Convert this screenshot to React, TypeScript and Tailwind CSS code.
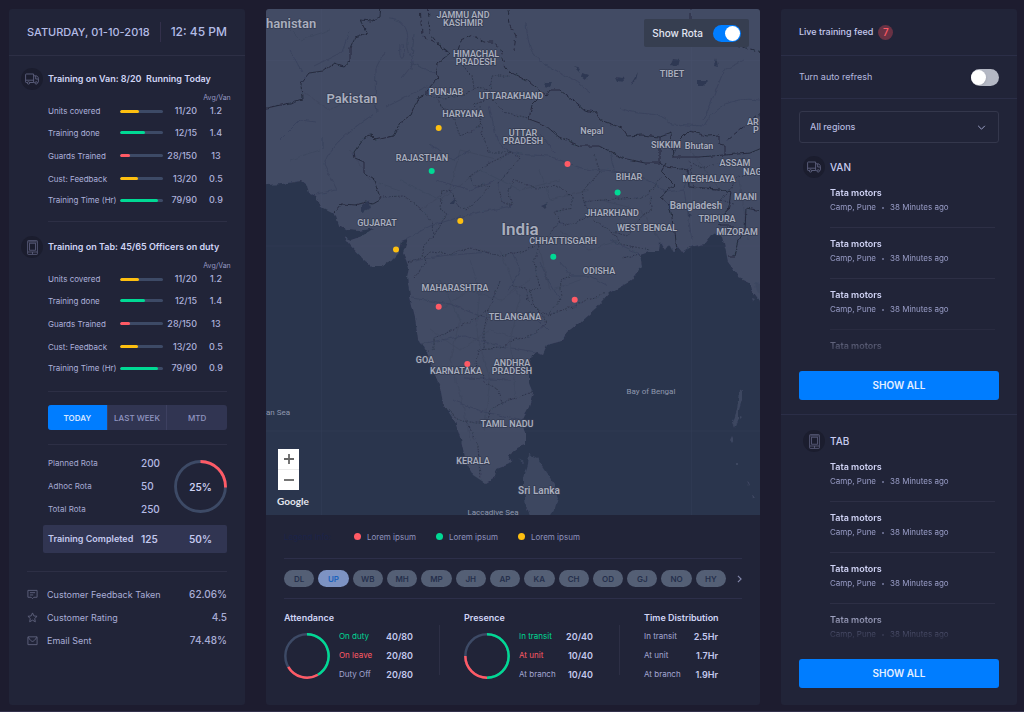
import { useState } from "react";
import type { ReactNode } from "react";

type Tone = "amber" | "green" | "red";

const BAR: Record<Tone, string> = {
  amber: "bg-[#fdbf10]",
  green: "bg-[#00d994]",
  red: "bg-[#ff5a65]",
};

const metrics: { label: string; tone: Tone; fill: number; value: string; avg: string }[] = [
  { label: "Units covered", tone: "amber", fill: 44, value: "11/20", avg: "1.2" },
  { label: "Training done", tone: "green", fill: 59, value: "12/15", avg: "1.4" },
  { label: "Guards Trained", tone: "red", fill: 23, value: "28/150", avg: "13" },
  { label: "Cust: Feedback", tone: "amber", fill: 43, value: "13/20", avg: "0.5" },
  { label: "Training Time (Hr)", tone: "green", fill: 88, value: "79/90", avg: "0.9" },
];

const regions = ["DL", "UP", "WB", "MH", "MP", "JH", "AP", "KA", "CH", "OD", "GJ", "NO", "HY"];

function TruckIcon() {
  return (
    <svg viewBox="0 0 14 12" className="h-3 w-3.5" fill="none" stroke="#5f6280" strokeWidth=".9">
      <path d="M2 9.500H1.200a.6.6 0 0 1-.6-.6V1.600a.6.6 0 0 1 .6-.6H8.600v8.500H5M.6 7.200h8M8.600 2.800h2.200c1.500 0 2.600 1.200 2.600 2.800v3.300c0 .4-.2.600-.6.600M8.600 9.500h1M10.700 3v3h2.600" />
      <circle cx="3.500" cy="9.900" r="1.200" />
      <circle cx="11.200" cy="9.900" r="1.200" />
    </svg>
  );
}

function TabletIcon() {
  return (
    <svg viewBox="0 0 11 15" className="h-[15px] w-[11px]" fill="none" stroke="#5f6280" strokeWidth=".8">
      <rect x=".6" y=".6" width="9.800" height="13.800" rx=".6" />
      <rect x="2.600" y="3.200" width="5.800" height="7" />
      <path d="M.8 12h9.400M5.500 12v2.200M1.200 1.900h8.600" />
    </svg>
  );
}

function IconDisc({ children }: { children: ReactNode }) {
  return (
    <span className="flex size-[22px] shrink-0 items-center justify-center rounded-full bg-[#1b1d2e]">{children}</span>
  );
}

function Donut({ size, arcs, children }: { size: string; arcs: { d: string; color: string }[]; children?: ReactNode }) {
  return (
    <div className={`relative flex shrink-0 items-center justify-center ${size}`}>
      <svg viewBox="0 0 52 52" className="absolute inset-0 size-full" fill="none" strokeWidth="2.800">
        <circle cx="26" cy="26" r="24.500" stroke="#3d4a66" />
        {arcs.map((arc) => (
          <path key={arc.d} d={arc.d} stroke={arc.color} />
        ))}
      </svg>
      <div className="relative flex">{children}</div>
    </div>
  );
}

function Rule({ className }: { className: string }) {
  return <hr className={`border-0 border-t border-[#2d2f45] ${className}`} />;
}

function MetricBlock({ icon, title }: { icon: ReactNode; title: string }) {
  return (
    <section>
      <div className="flex items-center gap-[5px] pl-3">
        <IconDisc>{icon}</IconDisc>
        <h2 className="whitespace-pre text-[9px] font-semibold text-[#d0d4f5]">{title}</h2>
      </div>
      <table className="ml-[39px] w-[187px] table-fixed border-collapse">
        <thead>
          <tr className="text-[7px] text-[#9599c3]">
            <th className="w-[72px] p-0" />
            <th className="w-[43px] p-0" />
            <th className="w-[34px] p-0" />
            <th className="p-0 text-center font-normal">
              <div className="h-[11px] pl-0.5 leading-[15px]">Avg/Van</div>
            </th>
          </tr>
        </thead>
        <tbody>
          {metrics.map((m) => (
            <tr key={m.label} className="h-[23px] text-[9px] leading-[14px] text-[#adb1db] first:h-5 last:h-5">
              <th scope="row" className="whitespace-nowrap p-0 text-left text-[8px] font-normal">
                {m.label}
              </th>
              <td className="p-0">
                <div className="h-[3px] overflow-hidden rounded-full bg-[#3d4a66]">
                  <div className={`h-full rounded-full ${BAR[m.tone]}`} style={{ width: `${m.fill}%` }} />
                </div>
              </td>
              <td className="p-0 text-right font-medium">{m.value}</td>
              <td className="p-0 text-center font-medium">{m.avg}</td>
            </tr>
          ))}
        </tbody>
      </table>
    </section>
  );
}

function Overview() {
  const [range, setRange] = useState("TODAY");
  return (
    <aside className="flex flex-col rounded-[3px] bg-[#212438]">
      <header className="flex h-[47px] items-center justify-between border-b border-[#2d2f45] px-[18px] text-[#b4bce6]">
        <span className="text-[11px] font-medium">SATURDAY, 01-10-2018</span>
        <span className="flex h-5 items-center border-l border-[#33304b] pl-2.5 text-[12px] font-medium">12: 45 PM</span>
      </header>
      <div className="pt-3">
        <MetricBlock icon={<TruckIcon />} title="Training on Van: 8/20  Running Today" />
      </div>
      <Rule className="ml-[39px] mr-[18px] mt-[11px]" />
      <div className="pt-3.5">
        <MetricBlock icon={<TabletIcon />} title="Training on Tab: 45/65 Officers on duty" />
      </div>
      <Rule className="ml-[39px] mr-[18px] mt-[13px]" />

      <div className="ml-[39px] mr-[18px] mt-[13px] grid h-[25px] grid-cols-3 overflow-hidden rounded-[3px] bg-[#313552]">
        {["TODAY", "LAST WEEK", "MTD"].map((r) => (
          <button
            key={r}
            type="button"
            onClick={() => setRange(r)}
            className={`border-r border-[#3d4060] text-[8px] last:border-r-0 ${
              range === r ? "bg-[#007dff] font-semibold text-[#d7e6ff]" : "font-medium text-[#9297c2]"
            }`}
          >
            {r}
          </button>
        ))}
      </div>
      <Rule className="ml-[39px] mr-[18px] mt-3.5" />

      <div className="ml-[39px] mr-[18px] mt-[7px] flex items-center justify-between">
        <dl className="grid grid-cols-[93px_auto] text-[10px] leading-[23px] text-[#b4bae4]">
          {[
            ["Planned Rota", "200"],
            ["Adhoc Rota", "50"],
            ["Total Rota", "250"],
          ].map(([k, v]) => (
            <div key={k} className="contents">
              <dt className="text-[8px] leading-[23px] text-[#a6aad3]">{k}</dt>
              <dd className="font-medium">{v}</dd>
            </div>
          ))}
        </dl>
        <Donut size="size-[53px]" arcs={[{ d: "M26 1.500A24.500 24.500 0 0 1 50.500 26v1", color: "#ff5a65" }]}>
          <span className="text-[10px] font-semibold leading-3 text-[#cdd1f2]">25%</span>
        </Donut>
      </div>
      <div className="ml-[34px] mr-[18px] mt-1 flex h-7 items-center rounded-[2px] bg-[#313552] text-[10px] font-semibold text-[#c3c8ee]">
        <span className="w-[98px] pl-[5px] text-[9px]">Training Completed</span>
        <span>125</span>
        <span className="ml-auto w-[53px] text-center">50%</span>
      </div>
      <Rule className="mx-[18px] mt-[18px]" />

      <ul className="mx-[18px] mt-[11px] text-[10px] text-[#a9add6]">
        <li className="flex h-[23px] items-center">
          <svg viewBox="0 0 12 12" className="mr-[9px] size-[11px]" fill="none" stroke="#5f627e">
            <path d="M1 1.500h10v7.500H7.500L6 10.500 4.500 9H1zM3.200 4h5.600M3.200 6.500h3.600" />
          </svg>
          <span className="text-[9px]">Customer Feedback Taken</span>
          <span className="ml-auto font-medium">62.06%</span>
        </li>
        <li className="flex h-[23px] items-center">
          <svg viewBox="0 0 12 12" className="mr-[9px] size-[11px]" fill="none" stroke="#5f627e">
            <path d="M6 1l1.500 3.300 3.500.4-2.600 2.400.7 3.600L6 8.900l-3.100 1.800.7-3.600L1 4.700l3.500-.4z" />
          </svg>
          <span className="text-[9px]">Customer Rating</span>
          <span className="ml-auto font-medium">4.5</span>
        </li>
        <li className="flex h-[23px] items-center">
          <svg viewBox="0 0 12 12" className="mr-[9px] size-[11px]" fill="none" stroke="#5f627e">
            <path d="M1 2h10v8.500H1zM1.500 2.500C3 5.500 5 7 6 7s3-1.500 4.500-4.500" />
          </svg>
          <span className="text-[9px]">Email Sent</span>
          <span className="ml-auto font-medium">74.48%</span>
        </li>
      </ul>
    </aside>
  );
}

const stateLabels: [string, number, number][] = [
  ["JAMMU AND", 463, 18],
  ["KASHMIR", 463, 26],
  ["HIMACHAL", 476, 57],
  ["PRADESH", 476, 65],
  ["PUNJAB", 446, 95],
  ["UTTARAKHAND", 511, 99],
  ["HARYANA", 463, 117],
  ["RAJASTHAN", 422, 161],
  ["GUJARAT", 377, 226],
  ["UTTAR", 523, 136],
  ["PRADESH", 523, 144],
  ["TIBET", 672, 77],
  ["SIKKIM", 666, 148],
  ["BIHAR", 629, 180],
  ["ASSAM", 735, 166],
  ["MEGHALAYA", 709, 182],
  ["JHARKHAND", 612, 216],
  ["WEST BENGAL", 647, 231],
  ["CHHATTISGARH", 563, 244],
  ["TRIPURA", 717, 222],
  ["MIZORAM", 737, 235],
  ["ODISHA", 599, 274],
  ["MAHARASHTRA", 455, 291],
  ["TELANGANA", 515, 320],
  ["GOA", 425, 363],
  ["KARNATAKA", 456, 374],
  ["ANDHRA", 512, 366],
  ["PRADESH", 512, 374],
  ["TAMIL NADU", 507, 427],
  ["KERALA", 473, 464],
];

const edgeLabels: [string, number, number][] = [
  ["AR", 747, 125],
  ["P", 753, 133],
  ["NAG", 743, 175],
  ["MANI", 734, 200],
];

const pins: [number, number, Tone][] = [
  [438.700, 128, "amber"],
  [431.700, 171, "green"],
  [460.300, 221, "amber"],
  [396, 249.500, "amber"],
  [567.500, 164, "red"],
  [617.600, 192.500, "green"],
  [553.300, 256.700, "green"],
  [574.700, 299.700, "red"],
  [438.700, 306.800, "red"],
  [467.300, 364, "red"],
];

const PIN: Record<Tone, string> = { amber: "#fdbf10", green: "#00d994", red: "#ff5a65" };

function IndiaMap() {
  return (
    <svg
      viewBox="266 9 494 506"
      preserveAspectRatio="xMidYMid slice"
      className="absolute inset-0 size-full font-[Roboto,sans-serif]"
      role="img"
      aria-label="Map of India"
    >
      <defs>
        <filter id="rough" filterUnits="userSpaceOnUse" x="256" y="0" width="514" height="525">
          <feTurbulence type="fractalNoise" baseFrequency="0.14" numOctaves="3" seed="4" />
          <feDisplacementMap in="SourceGraphic" scale="4" xChannelSelector="R" yChannelSelector="G" />
        </filter>
      </defs>
      <rect x="266" y="9" width="494" height="506" fill="#424b64" />

      {/* rivers and lakes */}
      <g filter="url(#rough)" fill="none" stroke="#39425c" strokeWidth="0.900">
        <path d="M377 112C374 98 376 80 376 68L384 52M403 44C406 64 398 62 400 45M388 18C402 18 410 30 407 42C405 52 414 58 413 64L402 78M413 64L437 74M374 114L362 122C346 134 330 146 324 164" />
        <path d="M324 164L337 190M386 107L404 98 428 86M337 190L316 194M323 136V150M414 34L411 70" />
        <path d="M526 22C528 44 530 54 545 64 560 74 572 76 590 92M620 108C640 118 656 108 672 124L704 126C712 110 728 96 760 100M704 120L716 90 724 70 744 60" />
        <path d="M489 105L497 140C510 158 530 154 548 156 570 162 580 172 605 170 640 174 654 180 664 192M540 134L556 154M610 152L614 170M664 192L684 190 688 168M684 190L692 240" />
        <path d="M401 242L430 226 470 214 512 206M409 262L440 256 490 252M412 298L450 304 480 316 508 320 530 312 548 330M420 344L464 336 500 346 536 352M464 378L510 380M452 400L484 412 524 420" />
        <path d="M560 300L548 280 540 262M608 286L590 276 572 276 560 262M640 254L610 240M508 292L520 270 512 252M430 144L452 160 470 150M436 180L470 190 496 180M350 30L342 52 314 66M290 50L302 72M280 140L300 120 316 122" />
      </g>
      <g filter="url(#rough)" stroke="#394159" strokeWidth="0.600" fill="none" opacity="0.600">
        <path d="M440 310L470 290 500 300 530 280M430 330L460 350 490 330 520 340M470 260L480 290 476 330 490 380 484 430M440 280L460 320 450 360 462 400 470 440M500 250L520 300 510 340 516 400M540 250L550 290 580 280M560 230L590 250 620 240M600 200L640 210 660 240" />
        <path d="M400 180L440 200 480 170 520 190 560 180M420 210L450 190 460 150 500 160M350 150L370 180 400 190M300 90L330 110 350 100M280 20L300 40 330 30M290 160L320 150M540 170L550 200 590 190M690 150L720 190M740 180L748 240M530 470L552 490M526 496L556 480M538 462L540 514" />
      </g>
      <g filter="url(#rough)" fill="#2f3953">
        <path d="M574 67l7 2-2 3zM582 73l6 2-3 5-4-3zM616 77l7 1 1 4-6-1zM638 72l-2 8-5 4zM673 58l7 1-2 8-8-1zM697 80l12 0-6 6-6 0zM546 83h6l-2 4-5-1zM716 58l2 9-4-1zM698 62l-1 6zM541 206l7-3-4 5zM362 212l9-4-2-7-7 4zM448 204l7-6-2 6zM688 213l4 2-2 3z" />
      </g>

      {/* sea */}
      <path
        filter="url(#rough)"
        fill="#2b344e"
        d="M250 186L283 184 301 181 307 186 309 193 316 196 320 207 332 213 336 217 339 225 348 230 359 231 374 228 362 236 351 240 344 237 350 245 363 259 371 266 381 266 393 260 398 255 401 241 408 239 403 253 406 260 409 268 407 277 410 297 415 317 418 340 428 355 433 370 440 387 443 403 455 422 461 440 466 463 473 475 485 483 495 477 497 468 512 462 508 455 519 447 525 445 525 433 522 420 529 407 533 393 529 383 529 367 532 355 537 352 543 354 547 345 562 341 567 332 579 323 596 308 609 293 631 281 642 267 640 255 649 252 659 252 660 242 665 250 669 244 673 252 677 246 682 252 690 247 705 244 711 236 717 232 722 237 726 252 728 262 739 277 750 282 752 290 759 300 775 302V530H250z"
      />
      <g fill="#3c4661" filter="url(#rough)">
        <path d="M529 454L537 458 547 473 554 484 558 498 555 508 548 518H531L526 507 524 490 524 477 528 464z" />
        <path d="M739 391l3-1 0 10-3 10 0 8-4 10-2-6 4-12zM732 436l2 4-2 3-2-3zM736 463h2v2h-2zM747 482l3 2-1 2zM752 494l3 4-2 2zM740 416l2 1-2 2zM752 299l3 1-2 2zM514 463l-2 2zM518 459l6 3-1 1z" />
        <path d="M755 282l5 3v10l-3-4z" />
      </g>

      {/* graticule */}
      <path d="M321.500 9V515M691.500 9V515M266 60.500H760M266 246H760M266 431H760" stroke="#5b6485" strokeWidth="0.500" opacity="0.180" />

      {/* state borders */}
      <g filter="url(#rough)" fill="none" stroke="#2a3045" strokeWidth="0.800" strokeDasharray="1.600 1.400">
        <path d="M427 96L444 98 462 96 474 88 472 76 458 62M437 99L444 110 452 114 460 136 474 130 482 124 474 104 490 98M474 88L490 90 492 76 510 76M490 98L500 108 504 112 528 118M480 106L482 132 488 152 512 152 520 158" />
        <path d="M512 152L488 164 470 176 474 186 490 186 478 200 466 210 458 206 452 192 442 190 440 208 448 214 440 224 434 236 424 244 422 258 408 262M380 197L404 196 420 208 432 222 434 234" />
        <path d="M520 158L498 184 502 202 512 206 508 190 514 180 536 188 560 186 572 198 572 208 554 212 560 222 540 244 520 252 500 256 470 248 450 254 430 252 424 258" />
        <path d="M594 154L600 172 582 192 584 202 602 200 640 198 652 190 662 176M584 202L592 218 612 232 628 236 642 216 652 208 650 196M612 232L620 244 650 250" />
        <path d="M560 222L568 226 590 216M540 244L534 262 540 288 530 290 534 306 548 316 562 310 576 306 586 300 596 298 606 292M512 286L526 288 528 300 542 314 546 324 534 334 514 340 500 348 478 350 476 362 486 384 498 388 502 402 490 410 486 422 466 422" />
        <path d="M414 278L420 270 426 262 424 256M500 282L494 296 488 310 474 320 456 328 434 338 434 350 424 352M488 310L484 330 484 350M502 402L516 398 532 392M442 404L452 414 468 424 478 446 480 478M570 276L560 280 562 296 548 316M640 254L622 258M688 160L700 168 744 158M690 166L694 188 730 190 738 176 760 172M728 192L720 200 734 204" />
      </g>

      {/* national borders */}
      <g filter="url(#rough)" fill="none" stroke="#23273a" strokeWidth="0.900">
        <path d="M262 109L276 106 290 103 302 99 301 83 309 73 323 71 334 63 344 66 350 61 350 48 355 37 367 33 360 20 371 21 380 17 381 5" />
        <path d="M438 42L441 49 450 53 438 63 436 75 439 77 427 90 427 95 418 98 411 115 402 121 393 136 376 140 371 135 366 136 354 152 355 158 364 162 364 173 373 178 380 197 380 200 373 204 366 202 356 205 342 204 334 213" />
        <path d="M512 73L529 82 546 96 550 90 560 90 584 110 595 112 600 120 622 128 627 136 642 135 660 137 660 163 645 163 622 158 600 146 580 146 559 137 545 125 529 119 532 105 540 97" />
        <path d="M660 137L671 133 673 157 699 157 725 155 725 145 719 144 719 135 707 136 689 131 680 140 673 155M660 163L665 167 673 168 688 170 689 187 719 189 731 192 728 212 718 218 720 226 732 226 732 236M666 163L661 172 674 185 660 197 669 205 672 217 674 233 676 250M746 208L745 230 739 240 735 256 728 256M746 208L762 211" />
        <path d="M725 155L750 153 762 148" />
      </g>
      <g filter="url(#rough)" fill="none" stroke="#23273a" strokeWidth="0.900" strokeDasharray="5 3">
        <path d="M420 5L422 36 438 44 450 53M428 5L430 34 440 46M458 50L461 41 472 35 484 42 494 42 501 50 506 68 512 74M508 10L510 24 516 36 514 50M727 140L742 128 762 112M690 5L690 28 708 30 722 40 742 47 762 52" />
      </g>

      <g fill="#a9aebd" stroke="#343b52" strokeWidth="1.500" paintOrder="stroke" strokeLinejoin="round">
        <g textAnchor="middle" className="text-[9px] font-semibold">
          {stateLabels.map(([t, x, y]) => (
            <text key={`${t}-${x}`} x={x} y={y}>
              {t}
            </text>
          ))}
        </g>
        <g className="text-[9px] font-semibold">
          {edgeLabels.map(([t, x, y]) => (
            <text key={t} x={x} y={y}>
              {t}
            </text>
          ))}
        </g>
        <g textAnchor="middle" className="font-semibold">
          <text x="266" y="28" textAnchor="start" className="text-[13px]">hanistan</text>
          <text x="352" y="103" className="text-[13px]">Pakistan</text>
          <text x="520" y="235" className="text-[17px]">India</text>
          <text x="592" y="134" className="text-[9px]">Nepal</text>
          <text x="699" y="149" className="text-[9px]">Bhutan</text>
          <text x="696" y="209" className="text-[10px]">Bangladesh</text>
          <text x="539" y="494" className="text-[10px]">Sri Lanka</text>
        </g>
      </g>
      <g fill="#8f98ae" textAnchor="middle" className="text-[8px]">
        <text x="651" y="394">Bay of Bengal</text>
        <text x="266" y="415" textAnchor="start">an Sea</text>
        <text x="493" y="515">Laccadive Sea</text>
      </g>

      {pins.map(([x, y, tone]) => (
        <circle key={`${x}-${y}`} cx={x} cy={y} r="3" fill={PIN[tone]} />
      ))}
    </svg>
  );
}

const green = "text-[#00d994]";
const red = "text-[#ff5a65]";
const plain = "text-[#a3a7d2]";

function StatList({ rows }: { rows: [string, string, string][] }) {
  return (
    <dl className="grid w-[74px] grid-cols-[1fr_auto] text-[9px] leading-[19px]">
      {rows.map(([k, v, tone]) => (
        <div key={k} className="contents">
          <dt className={`whitespace-nowrap text-[8px] leading-[19px] ${tone}`}>{k}</dt>
          <dd className="text-right font-semibold text-[#c5c9ee]">{v}</dd>
        </div>
      ))}
    </dl>
  );
}

function MapPanel() {
  const [active, setActive] = useState("UP");
  return (
    <main className="flex min-w-0 flex-col overflow-hidden rounded-[3px] bg-[#212438]">
      <div className="relative h-[506px] overflow-hidden">
        <IndiaMap />
        <label className="absolute right-[11px] top-2.5 flex h-7 items-center gap-2.5 rounded-[2px] bg-[#363e50] px-2 text-[10px] font-medium text-[#e3e6f3]">
          Show Rota
          <input
            type="checkbox"
            defaultChecked
            className="relative h-[17px] w-7 appearance-none rounded-full bg-[#b4b8c4] before:absolute before:left-0 before:top-px before:size-[15px] before:rounded-full before:bg-white checked:bg-[#007dff] checked:before:left-3"
          />
        </label>
        <div className="absolute bottom-[25px] left-3 flex h-[41px] w-[21px] flex-col bg-white">
          <button type="button" aria-label="Zoom in" className="flex flex-1 items-center justify-center border-b border-[#ececec]">
            <svg viewBox="0 0 10 10" className="size-[10px]" stroke="#666" strokeWidth="1.800">
              <path d="M5 0v10M0 5h10" />
            </svg>
          </button>
          <button type="button" aria-label="Zoom out" className="flex flex-1 items-center justify-center">
            <svg viewBox="0 0 10 10" className="size-[10px]" stroke="#666" strokeWidth="1.800">
              <path d="M0 5h10" />
            </svg>
          </button>
        </div>
        <span className="absolute bottom-2 left-[11px] font-[Lato,sans-serif] text-[10px] font-bold leading-3 text-[#e4e7ee]">Google</span>
      </div>

      <div className="px-[18px]">
        <div className="flex h-11 items-center gap-5 border-b border-[#2d2f4a] text-[8px] text-[#8e92bd]">
          <span className="w-[50px] whitespace-nowrap text-[#1b2349]">Legend Info:</span>
          {(["red", "green", "amber"] as Tone[]).map((tone) => (
            <span key={tone} className="flex items-center gap-1.5">
              <span className={`size-[7px] rounded-full ${BAR[tone]}`} />
              <span className="w-[49px] whitespace-nowrap">Lorem ipsum</span>
            </span>
          ))}
        </div>
        <div className="flex h-10 items-center gap-1 border-b border-[#2d2f4a]">
          {regions.map((r) => (
            <button
              key={r}
              type="button"
              onClick={() => setActive(r)}
              className={`h-[17px] flex-1 rounded-full text-[8px] font-semibold ${
                active === r ? "bg-[#7d93c3] text-[#1b62bd]" : "bg-[#545f75] text-[#252f4c]"
              }`}
            >
              {r}
            </button>
          ))}
          <button type="button" aria-label="More regions" className="ml-1 flex h-4 w-2 items-center justify-end">
            <svg viewBox="0 0 6 10" className="h-2 w-[5px]" fill="none" stroke="#8286ab" strokeWidth="1.400">
              <path d="M1 1l4 4-4 4" />
            </svg>
          </button>
        </div>
        <div className="flex pt-3">
          <section className="w-[155px]">
            <h2 className="text-[9px] font-semibold leading-[14px] text-[#d0d4f5]">Attendance</h2>
            <div className="flex items-center gap-[9px] pt-0.5">
              <Donut
                size="size-[46px]"
                arcs={[
                  { d: "M26 1.500A24.500 24.500 0 0 1 38.250 47.200", color: "#00d994" },
                  { d: "M38.250 47.200A24.500 24.500 0 0 1 4.800 38.250", color: "#ff5a65" },
                ]}
              />
              <StatList rows={[["On duty", "40/80", green], ["On leave", "20/80", red], ["Duty Off", "20/80", plain]]} />
            </div>
          </section>
          <div className="mr-6 mt-3.5 h-[50px] w-px shrink-0 bg-[#2d2f45]" />
          <section className="w-[155px]">
            <h2 className="text-[9px] font-semibold leading-[14px] text-[#d0d4f5]">Presence</h2>
            <div className="flex items-center gap-[9px] pt-0.5">
              <Donut
                size="size-[46px]"
                arcs={[
                  { d: "M26 1.500A24.500 24.500 0 0 1 26 50.500", color: "#00d994" },
                  { d: "M26 50.500A24.500 24.500 0 0 1 1.500 26", color: "#ff5a65" },
                ]}
              />
              <StatList rows={[["In transit", "20/40", green], ["At unit", "10/40", red], ["At branch", "10/40", plain]]} />
            </div>
          </section>
          <div className="mr-6 mt-3.5 h-[50px] w-px shrink-0 bg-[#2d2f45]" />
          <section>
            <h2 className="whitespace-nowrap text-[9px] font-semibold leading-[14px] text-[#d0d4f5]">Time Distribution</h2>
            <div className="pt-0.5">
              <StatList rows={[["In transit", "2.5Hr", plain], ["At unit", "1.7Hr", plain], ["At branch", "1.9Hr", plain]]} />
            </div>
          </section>
        </div>
      </div>
    </main>
  );
}

function Feed({ icon, title, height }: { icon: ReactNode; title: string; height: string }) {
  return (
    <section className="px-[18px]">
      <div className="flex items-center gap-[5px] pl-1">
        <IconDisc>{icon}</IconDisc>
        <h2 className="text-[10px] font-medium text-[#c8ccf0]">{title}</h2>
      </div>
      <ul
        className={`ml-[31px] mr-1 mt-[7px] overflow-hidden [mask-image:linear-gradient(to_bottom,black_calc(100%-40px),transparent)] ${height}`}
      >
        {[0, 1, 2, 3].map((i) => (
          <li key={i} className="mb-2 border-b border-[#2d2f45] pb-3">
            <h3 className="text-[9px] font-semibold leading-[15px] text-[#d0d3f5]">Tata motors</h3>
            <p className="flex items-center gap-1.5 text-[8px] leading-[15px] text-[#999dc7]">
              <span>Camp, Pune</span>
              <span className="size-0.5 rounded-full bg-[#777b9f]" />
              <span>38 Minutes ago</span>
            </p>
          </li>
        ))}
      </ul>
      <button type="button" className="mt-3.5 h-[29px] w-full rounded-[3px] bg-[#007dff] text-[10px] font-semibold text-[#e4eeff]">
        SHOW ALL
      </button>
    </section>
  );
}

function LiveFeed() {
  return (
    <aside className="rounded-[3px] bg-[#212438]">
      <header className="flex h-[47px] items-center gap-[5px] border-b border-[#2b2e47] px-[18px]">
        <h1 className="text-[9px] font-medium text-[#c5c9ee]">Live training feed</h1>
        <span className="flex size-[15px] items-center justify-center rounded-full bg-[#693244] text-[10px] font-medium text-[#ff5a65]">7</span>
      </header>
      <label className="flex h-[43px] items-center justify-between border-b border-[#2b2e47] px-[18px] text-[9px] text-[#b4b8df]">
        Turn auto refresh
        <input
          type="checkbox"
          className="relative h-[17px] w-7 appearance-none rounded-full bg-[#b4b8c4] before:absolute before:left-0 before:top-px before:size-[15px] before:rounded-full before:bg-white before:shadow checked:bg-[#007dff] checked:before:left-3"
        />
      </label>
      <div className="relative mx-[18px] mt-3">
        <select
          aria-label="Region"
          className="h-8 w-full appearance-none rounded-[3px] border border-[#34374c] bg-transparent px-2.5 text-[9px] font-medium text-[#b4b8df]"
        >
          <option>All regions</option>
        </select>
        <svg viewBox="0 0 10 6" className="pointer-events-none absolute right-[13px] top-3.5 h-[5px] w-[9px]" fill="none" stroke="#9da1c8" strokeWidth="1.200">
          <path d="M1 1l4 4 4-4" />
        </svg>
      </div>
      <div className="border-b border-[#2b2e47] pb-3.5 pt-[13px]">
        <Feed icon={<TruckIcon />} title="VAN" height="h-[172px]" />
      </div>
      <div className="pt-[15px]">
        <Feed icon={<TabletIcon />} title="TAB" height="h-[186px]" />
      </div>
    </aside>
  );
}

export default function App() {
  return (
    <div className="flex min-h-screen flex-col border-b border-[#33304b] bg-[#1d1c2f] pb-1.5 pl-[9px] pr-[7px] pt-[9px] font-[Inter,sans-serif]">
      <div className="grid flex-1 grid-cols-[236px_minmax(0,1fr)_236px] gap-[21px]">
        <Overview />
        <MapPanel />
        <LiveFeed />
      </div>
    </div>
  );
}
